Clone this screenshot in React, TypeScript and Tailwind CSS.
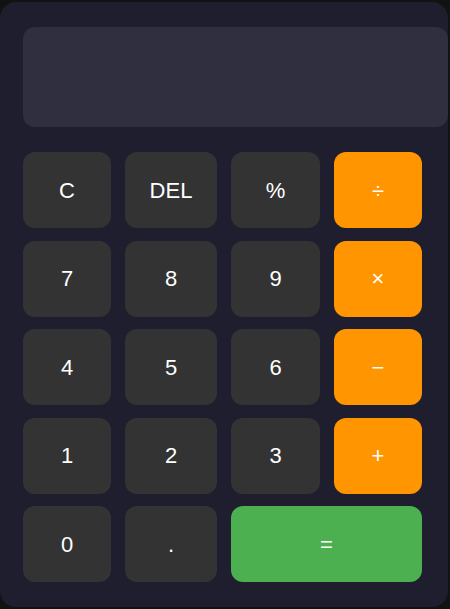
const keys: { label: string; kind: "num" | "op" | "eq" }[] = [
  { label: "C", kind: "num" },
  { label: "DEL", kind: "num" },
  { label: "%", kind: "num" },
  { label: "÷", kind: "op" },
  { label: "7", kind: "num" },
  { label: "8", kind: "num" },
  { label: "9", kind: "num" },
  { label: "×", kind: "op" },
  { label: "4", kind: "num" },
  { label: "5", kind: "num" },
  { label: "6", kind: "num" },
  { label: "−", kind: "op" },
  { label: "1", kind: "num" },
  { label: "2", kind: "num" },
  { label: "3", kind: "num" },
  { label: "+", kind: "op" },
  { label: "0", kind: "num" },
  { label: ".", kind: "num" },
  { label: "=", kind: "eq" },
]

export default function App() {
  return (
    <div className="min-h-[609px] w-[450px] overflow-hidden bg-[#121212] pt-[2px] font-['Liberation_Sans',Arial,sans-serif]">
      <div className="h-[605px] w-[448px] rounded-2xl bg-[#1f1e2e] pl-[23px] pt-[25px]">
        {/* Display */}
        <div className="h-[100px] w-[425px] rounded-xl bg-[#302f40]" />

        {/* Keypad */}
        <div className="mt-[25px] grid grid-cols-[88px_92px_89px_88px] gap-x-[14px] gap-y-[12.5px]">
          {keys.map((k) => (
            <button
              key={k.label}
              className={
                "flex h-[76px] items-center justify-center rounded-xl text-[22px] text-white " +
                (k.kind === "op"
                  ? "bg-[#ff9500]"
                  : k.kind === "eq"
                  ? "col-span-2 bg-[#4caf50]"
                  : "bg-[#333333]")
              }
            >
              {k.label}
            </button>
          ))}
        </div>
      </div>
    </div>
  )
}
